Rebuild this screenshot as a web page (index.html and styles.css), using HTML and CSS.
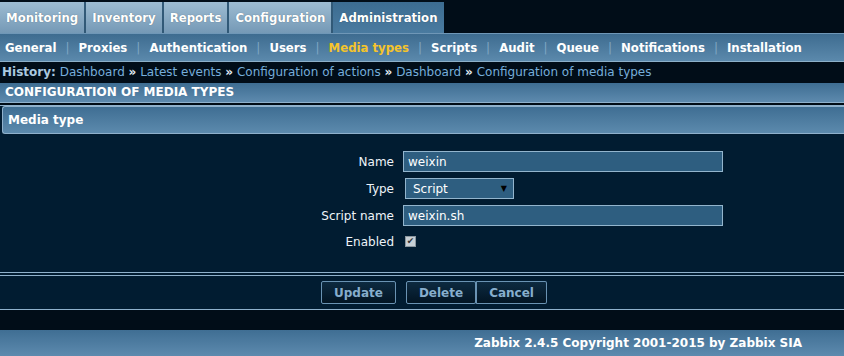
FILE: index.html
```html
<!DOCTYPE html>
<html lang="en">
<head>
  <meta charset="UTF-8" />
  <title>Configuration of media types</title>
  <link rel="stylesheet" href="styles.css">
</head>
<body>
  <header>
    <nav class="main-tabs">
      <a href="#">Monitoring</a>
      <a href="#">Inventory</a>
      <a href="#">Reports</a>
      <a href="#">Configuration</a>
      <a href="#" class="active">Administration</a>
    </nav>
    <nav class="sub-nav">
      <a href="#">General</a><span class="sep">|</span>
      <a href="#">Proxies</a><span class="sep">|</span>
      <a href="#">Authentication</a><span class="sep">|</span>
      <a href="#">Users</a><span class="sep">|</span>
      <a href="#" class="active">Media types</a><span class="sep">|</span>
      <a href="#">Scripts</a><span class="sep">|</span>
      <a href="#">Audit</a><span class="sep">|</span>
      <a href="#">Queue</a><span class="sep">|</span>
      <a href="#">Notifications</a><span class="sep">|</span>
      <a href="#">Installation</a>
    </nav>
    <div class="history">
      <b>History:</b>
      <a href="#">Dashboard</a> <span class="arrow">»</span>
      <a href="#">Latest events</a> <span class="arrow">»</span>
      <a href="#">Configuration of actions</a> <span class="arrow">»</span>
      <a href="#">Dashboard</a> <span class="arrow">»</span>
      <a href="#">Configuration of media types</a>
    </div>
  </header>

  <div class="page-title">CONFIGURATION OF MEDIA TYPES</div>

  <main class="content">
    <div class="box-header">Media type</div>

    <form class="media-form">
      <label for="name">Name</label>
      <input type="text" id="name" class="wide" value="weixin">

      <label for="type">Type</label>
      <div class="select">Script <span class="caret">▼</span></div>

      <label for="script">Script name</label>
      <input type="text" id="script" class="wide" value="weixin.sh">

      <label>Enabled</label>
      <div class="check"><span>✔</span></div>
    </form>

    <div class="form-actions">
      <button class="btn">Update</button>
      <div class="btn-group">
        <button class="btn">Delete</button>
        <button class="btn">Cancel</button>
      </div>
    </div>
  </main>

  <div class="spacer"></div>

  <footer>Zabbix 2.4.5 Copyright 2001-2015 by Zabbix SIA</footer>
</body>
</html>
```

FILE: styles.css
```css
:root {
  --dark-bg: #011c31;
  --black-bg: #010d18;
  --line: #8fb1cc;
  --link: #76aedb;
}

* {
  box-sizing: border-box;
  margin: 0;
  padding: 0;
}

body {
  background-color: var(--dark-bg);
  color: #fff;
  font-family: 'DejaVu Sans', sans-serif;
  font-size: 12px;
  width: 844px;
  height: 356px;
  overflow: hidden;
}

a {
  text-decoration: none;
}

.main-tabs {
  display: flex;
  background-color: var(--black-bg);
  padding-top: 2px;
  height: 33px;
}

.main-tabs a {
  display: flex;
  align-items: center;
  padding: 0 6px;
  height: 31px;
  color: #fff;
  font-family: 'DejaVu Sans Condensed', 'DejaVu Sans', sans-serif;
  font-weight: bold;
  font-size: 13px;
  background: linear-gradient(#9dbcd2, #7599b6);
  border-right: 2px solid #315977;
  text-shadow: 0 0 1px rgba(0,0,0,0.4);
}

.main-tabs a.active {
  background: linear-gradient(#3c6c91, #4a7ba0);
  border-right: none;
}

.sub-nav {
  display: flex;
  align-items: center;
  height: 29px;
  padding-left: 5px;
  background: linear-gradient(#3e6c90, #5b89ac);
  border-top: 1px solid #6f97b7;
  border-bottom: 1px solid #8db0c9;
}

.sub-nav a {
  color: #fff;
  font-family: 'DejaVu Sans Condensed', 'DejaVu Sans', sans-serif;
  font-weight: bold;
  font-size: 13px;
}

.sub-nav a.active {
  color: #f5c42b;
}

.sub-nav .sep {
  color: #7fa6c4;
  margin: 0 9px;
}

.history {
  height: 21px;
  padding: 3px 2px 0;
  background-color: var(--black-bg);
  color: var(--link);
}

.history b {
  color: #a9c9e0;
}

.history a {
  color: var(--link);
}

.history .arrow {
  color: #e2eef7;
  font-weight: bold;
}

.page-title {
  height: 20px;
  padding: 2px 5px 0;
  font-weight: bold;
  background: linear-gradient(#3e6d92, #5d8aae);
  border-bottom: 1px solid var(--line);
}

.content {
  border-top: 2px solid #000c16;
  padding-top: 1px;
}

.content::before {
  content: "";
  display: block;
  height: 1px;
  background-color: var(--line);
  margin-top: -1px;
}

.box-header {
  margin-left: 2px;
  height: 28px;
  padding: 6px 5px 0;
  font-weight: bold;
  background: linear-gradient(#3f6e93, #5c8aad);
  border: 1px solid var(--line);
  border-right: none;
  border-radius: 3px 0 0 3px;
}

.media-form {
  display: grid;
  grid-template-columns: 394px 320px;
  column-gap: 9px;
  row-gap: 6px;
  align-items: center;
  padding: 17px 0 24px;
}

.media-form label {
  text-align: right;
  color: #eef4f9;
}

.wide {
  width: 320px;
  height: 21px;
  padding: 0 4px;
  background-color: #2e5e80;
  border: 1px solid #93b5cd;
  color: #fff;
  font-family: inherit;
  font-size: 12px;
}

.select {
  display: flex;
  justify-content: space-between;
  align-items: center;
  width: 109px;
  height: 21px;
  margin-left: 2px;
  padding: 0 6px 0 7px;
  background-color: #2e5e80;
  border: 1px solid #93b5cd;
}

.select .caret {
  font-size: 8px;
  color: #000;
}

.check {
  display: flex;
  align-items: center;
  justify-content: center;
  width: 11px;
  height: 11px;
  margin: 4px 0 4px 2px;
  background-color: #c8d0d6;
  border: 1px solid #8c979f;
}

.check span {
  font-size: 9px;
  color: #333;
  line-height: 1;
}

.form-actions {
  display: flex;
  gap: 10px;
  padding: 5px 0 5px 321px;
  border-top: 1px solid var(--line);
  border-bottom: 1px solid var(--line);
  position: relative;
}

.form-actions::before {
  content: "";
  position: absolute;
  left: 0;
  right: 0;
  top: -4px;
  height: 1px;
  background-color: var(--line);
}

.btn-group {
  display: flex;
}

.btn {
  height: 23px;
  padding: 0 12px;
  background: linear-gradient(#0d2a40, #021524);
  border: 1px solid #6a93b3;
  border-radius: 2px;
  color: #86aecd;
  font-family: inherit;
  font-weight: bold;
  font-size: 12px;
}

.btn-group .btn + .btn {
  border-left: 2px solid #6a93b3;
  margin-left: -1px;
}

.spacer {
  height: 20px;
  background-color: var(--black-bg);
}

footer {
  height: 26px;
  padding: 6px 42px 0 0;
  text-align: right;
  font-weight: bold;
  background: linear-gradient(#3f6e93, #5d8aae);
}
```
